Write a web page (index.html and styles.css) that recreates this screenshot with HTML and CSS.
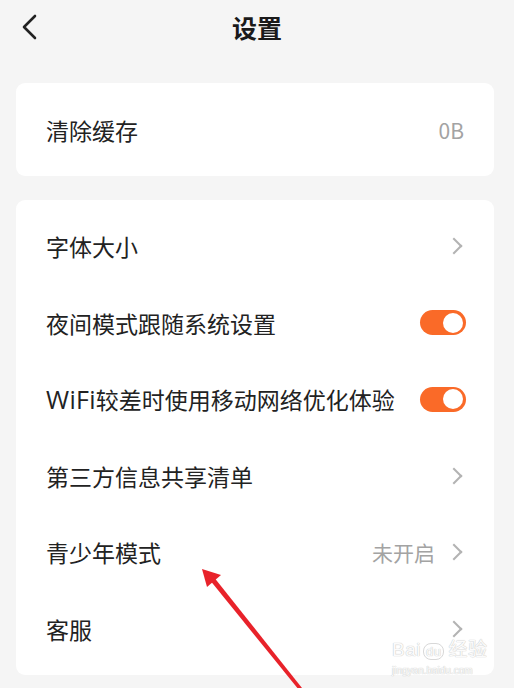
FILE: index.html
```html
<!DOCTYPE html>
<html lang="zh-CN">
<head>
  <meta charset="UTF-8" />
  <meta name="viewport" content="width=device-width, initial-scale=1.0" />
  <title>设置</title>
  <link rel="stylesheet" href="styles.css">
</head>
<body>
  <header class="top-bar">
    <svg class="back" width="18" height="26" viewBox="0 0 18 26">
      <path d="M14 2 L3 13 L14 24" fill="none" stroke="#222" stroke-width="2.6" stroke-linecap="round" stroke-linejoin="round"/>
    </svg>
    <h1>设置</h1>
  </header>

  <section class="card card-single">
    <div class="row">
      <span class="label">清除缓存</span>
      <span class="value">0B</span>
    </div>
  </section>

  <section class="card card-list">
    <div class="row">
      <span class="label">字体大小</span>
      <span class="chev"></span>
    </div>
    <div class="row">
      <span class="label">夜间模式跟随系统设置</span>
      <span class="toggle on"></span>
    </div>
    <div class="row">
      <span class="label"><span class="latin">WiFi</span>较差时使用移动网络优化体验</span>
      <span class="toggle on"></span>
    </div>
    <div class="row">
      <span class="label">第三方信息共享清单</span>
      <span class="chev"></span>
    </div>
    <div class="row">
      <span class="label">青少年模式</span>
      <span class="extra"><span class="value">未开启</span><span class="chev"></span></span>
    </div>
    <div class="row">
      <span class="label">客服</span>
      <span class="chev"></span>
    </div>
  </section>

  <svg class="arrow" width="514" height="688" viewBox="0 0 514 688">
    <path d="M299 690 L209 579 L213 576 L302 688 Z" fill="#e8222a"/>
    <path d="M202 569 L221 575 L207 587 Z" fill="#e8222a"/>
  </svg>

  <div class="watermark">
    <div class="wm-main">Bai<span class="wm-du">du</span>经验</div>
    <div class="wm-sub">jingyan.baidu.com</div>
  </div>
</body>
</html>
```

FILE: styles.css
```css
body {
  margin: 0;
  background-color: #f5f5f5;
  color: #222;
  font-family: "Noto Sans CJK SC", "Noto Sans", sans-serif;
  position: relative;
  height: 688px;
  overflow: hidden;
}

.top-bar {
  height: 56px;
  display: flex;
  align-items: center;
  justify-content: center;
  position: relative;
}

.back {
  position: absolute;
  left: 21px;
  top: 14px;
}

.top-bar h1 {
  margin: 0 0 2px 0;
  font-size: 25px;
  font-weight: 700;
  line-height: 54px;
  color: #1a1a1a;
}

.card {
  background-color: #fff;
  border-radius: 9px;
  margin: 0 20px 0 16px;
}

.card-single {
  margin-top: 27px;
}

.card-single .row {
  height: 93px;
}

.card-list {
  margin-top: 24px;
  padding: 8px 0;
}

.row {
  height: 76.5px;
  display: flex;
  align-items: center;
  justify-content: space-between;
  padding: 0 28px 0 30px;
}

.label {
  font-size: 23px;
  color: #222;
}

.latin {
  font-family: "Open Sans", "Noto Sans", sans-serif;
  font-size: 25px;
  letter-spacing: 0.3px;
}

.value {
  font-size: 21px;
  color: #a3a3a3;
}

.card-single .value {
  margin-right: 2px;
}

.extra {
  display: flex;
  align-items: center;
  gap: 13px;
}

.chev {
  width: 10px;
  height: 10px;
  border-top: 2px solid #b3b3b3;
  border-right: 2px solid #b3b3b3;
  transform: rotate(45deg);
  margin-right: 6px;
}

.toggle {
  width: 46px;
  height: 25px;
  border-radius: 13px;
  background-color: #fa6a28;
  position: relative;
}

.toggle::after {
  content: "";
  position: absolute;
  right: 3px;
  top: 2.5px;
  width: 20px;
  height: 20px;
  border-radius: 50%;
  background-color: #fff;
}

.arrow {
  position: absolute;
  left: 0;
  top: 0;
  pointer-events: none;
}

.watermark {
  position: absolute;
  left: 392px;
  top: 640px;
  color: #fbfbfb;
  text-shadow: 0 0 1px #c8c8c8, 0 0 1px #c8c8c8;
  font-family: "Liberation Sans", "Noto Sans CJK SC", sans-serif;
}

.wm-main {
  font-size: 19px;
  line-height: 20px;
  letter-spacing: 0.5px;
}

.wm-du {
  font-size: 13px;
  border: 1px solid #d8d8d8;
  border-radius: 8px;
  padding: 0 2px;
  margin: 0 4px 0 2px;
}

.wm-sub {
  font-size: 10px;
  line-height: 14px;
  margin-top: 2px;
}
```
